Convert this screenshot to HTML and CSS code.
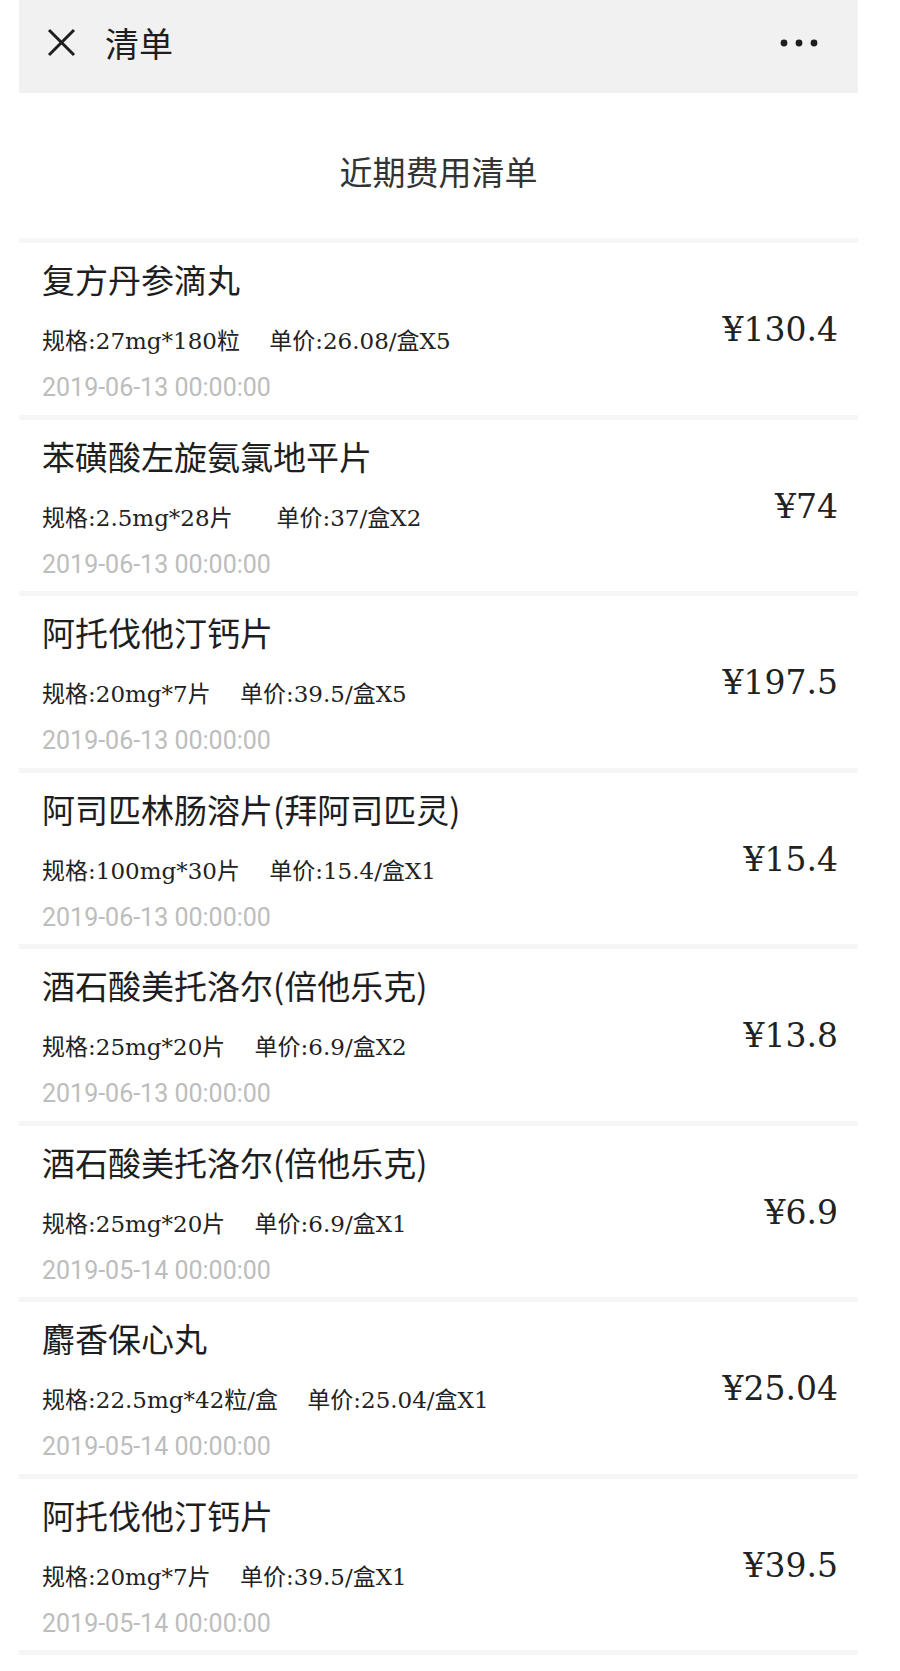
FILE: index.html
```
<!DOCTYPE html>
<html lang="zh-CN">
<head>
    <meta charset="UTF-8">
    <meta name="viewport" content="width=device-width, initial-scale=1.0">
    <title>清单</title>
    <link rel="stylesheet" href="styles.css">
</head>
<body>

<div class="page">
    <!-- Top bar -->
    <div class="topbar">
        <svg class="close-icon" width="29" height="29" viewBox="0 0 29 29">
            <line x1="2" y1="2" x2="27" y2="27" stroke="#1e1e1e" stroke-width="3"/>
            <line x1="27" y1="2" x2="2" y2="27" stroke="#1e1e1e" stroke-width="3"/>
        </svg>
        <div class="topbar-title">清单</div>
        <svg class="more-icon" width="38" height="8" viewBox="0 0 38 8">
            <circle cx="4" cy="4" r="3.4" fill="#1e1e1e"/>
            <circle cx="19" cy="4" r="3.4" fill="#1e1e1e"/>
            <circle cx="34" cy="4" r="3.4" fill="#1e1e1e"/>
        </svg>
    </div>

    <div class="subtitle">近期费用清单</div>

    <!-- Bill list -->
    <div class="bill-list">
        <div class="item">
            <div class="item-info">
                <div class="item-name">复方丹参滴丸</div>
                <div class="item-spec">规格:27mg*180粒    单价:26.08/盒X5</div>
                <div class="item-date">2019-06-13 00:00:00</div>
            </div>
            <div class="item-price">¥130.4</div>
        </div>
        <div class="item">
            <div class="item-info">
                <div class="item-name">苯磺酸左旋氨氯地平片</div>
                <div class="item-spec">规格:2.5mg*28片      单价:37/盒X2</div>
                <div class="item-date">2019-06-13 00:00:00</div>
            </div>
            <div class="item-price">¥74</div>
        </div>
        <div class="item">
            <div class="item-info">
                <div class="item-name">阿托伐他汀钙片</div>
                <div class="item-spec">规格:20mg*7片    单价:39.5/盒X5</div>
                <div class="item-date">2019-06-13 00:00:00</div>
            </div>
            <div class="item-price">¥197.5</div>
        </div>
        <div class="item">
            <div class="item-info">
                <div class="item-name">阿司匹林肠溶片(拜阿司匹灵)</div>
                <div class="item-spec">规格:100mg*30片    单价:15.4/盒X1</div>
                <div class="item-date">2019-06-13 00:00:00</div>
            </div>
            <div class="item-price">¥15.4</div>
        </div>
        <div class="item">
            <div class="item-info">
                <div class="item-name">酒石酸美托洛尔(倍他乐克)</div>
                <div class="item-spec">规格:25mg*20片    单价:6.9/盒X2</div>
                <div class="item-date">2019-06-13 00:00:00</div>
            </div>
            <div class="item-price">¥13.8</div>
        </div>
        <div class="item">
            <div class="item-info">
                <div class="item-name">酒石酸美托洛尔(倍他乐克)</div>
                <div class="item-spec">规格:25mg*20片    单价:6.9/盒X1</div>
                <div class="item-date">2019-05-14 00:00:00</div>
            </div>
            <div class="item-price">¥6.9</div>
        </div>
        <div class="item">
            <div class="item-info">
                <div class="item-name">麝香保心丸</div>
                <div class="item-spec">规格:22.5mg*42粒/盒    单价:25.04/盒X1</div>
                <div class="item-date">2019-05-14 00:00:00</div>
            </div>
            <div class="item-price">¥25.04</div>
        </div>
        <div class="item">
            <div class="item-info">
                <div class="item-name">阿托伐他汀钙片</div>
                <div class="item-spec">规格:20mg*7片    单价:39.5/盒X1</div>
                <div class="item-date">2019-05-14 00:00:00</div>
            </div>
            <div class="item-price">¥39.5</div>
        </div>
    </div>
</div>

</body>
</html>
```

FILE: styles.css
```
body {
    margin: 0;
    background-color: #fff;
    font-family: "Noto Sans CJK SC", sans-serif;
    color: #1e1e1e;
}
.page {
    width: 839px;
    margin-left: 19px;
}
.topbar {
    box-sizing: border-box;
    height: 93px;
    display: flex;
    align-items: center;
    padding: 0 40px 8px 28px;
    background-color: #f1f1f1;
}
.close-icon {
    flex-shrink: 0;
}
.topbar-title {
    flex: 1;
    margin-left: 29px;
    font-size: 34px;
    line-height: 1;
}
.subtitle {
    padding: 53px 0 42px;
    text-align: center;
    font-size: 33px;
    line-height: 50px;
    color: #333;
}
.item {
    display: flex;
    align-items: center;
    padding: 0 20px 0 23px;
    border-top: 5px solid #f6f6f6;
}
.item:last-child {
    border-bottom: 5px solid #f6f6f6;
}
.item-info {
    flex: 1;
    padding: 12px 0 6.5px;
}
.item-name {
    font-size: 33px;
    line-height: 49px;
}
.item-spec {
    margin-top: 17px;
    font-family: "DejaVu Serif", "Noto Sans CJK SC", serif;
    font-size: 23px;
    line-height: 40px;
    white-space: pre;
    color: #222;
}
.item-date {
    margin-top: 7px;
    font-family: Roboto, sans-serif;
    font-size: 25px;
    line-height: 40px;
    color: #bdbdbd;
}
.item-price {
    padding-top: 2px;
    font-family: "DejaVu Serif", serif;
    font-size: 33px;
    color: #222;
}
```
